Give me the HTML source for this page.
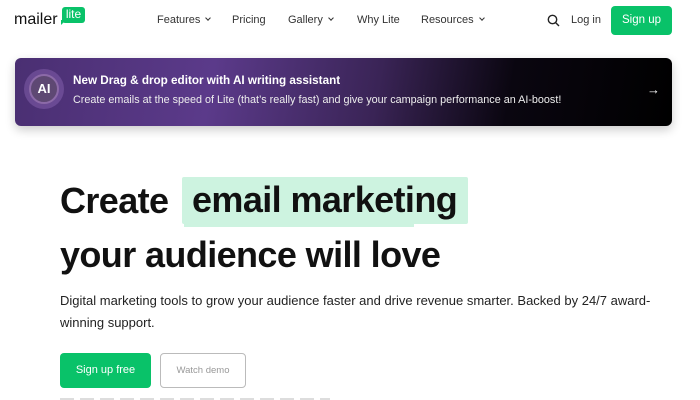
<!DOCTYPE html>
<html><head><meta charset="utf-8"><style>
*{margin:0;padding:0;box-sizing:border-box}
body{width:700px;height:400px;overflow:hidden;background:#fff;font-family:"Liberation Sans",sans-serif;color:#111;position:relative}
.a{position:absolute}
.nav{font-size:11px;color:#333;top:14px}
.chev{display:inline-block;width:4px;height:4px;border-right:1.3px solid #333;border-bottom:1.3px solid #333;transform:rotate(45deg);margin-left:6px;position:relative;top:-3px}
.banner{left:15px;top:58px;width:657px;height:68px;border-radius:6px;background:linear-gradient(100deg,#4a2f72 0%,#5b3a8a 30%,#3a2456 55%,#0a0610 75%,#000 100%);box-shadow:0 4px 10px rgba(0,0,0,.2)}
.h{font-size:36px;font-weight:bold;letter-spacing:-0.6px;line-height:46px;white-space:nowrap}
</style></head><body>
<div class="a" style="left:14px;top:11px;font-size:16px;color:#111">mailer</div>
<div class="a" style="left:62px;top:7px;width:23px;height:16px;background:#09c269;border-radius:3px;color:#fff;font-size:12px;text-align:center;line-height:15px">lite</div>
<div class="a" style="left:61px;top:20px;width:0;height:0;border-left:5px solid #09c269;border-bottom:5px solid transparent"></div>
<div class="a nav" style="left:157px">Features<span class="chev"></span></div>
<div class="a nav" style="left:232px">Pricing</div>
<div class="a nav" style="left:288px">Gallery<span class="chev"></span></div>
<div class="a nav" style="left:357px">Why Lite</div>
<div class="a nav" style="left:421px">Resources<span class="chev"></span></div>
<svg class="a" style="left:547px;top:14px" width="13" height="13" viewBox="0 0 13 13"><circle cx="5.5" cy="5.5" r="4.2" fill="none" stroke="#222" stroke-width="1.4"/><path d="M8.5 8.5L12 12" stroke="#222" stroke-width="1.4"/></svg>
<div class="a nav" style="left:571px">Log in</div>
<div class="a" style="left:611px;top:6px;width:61px;height:29px;background:#09c269;border-radius:4px;color:#fff;font-size:11.5px;text-align:center;line-height:29px">Sign up</div>

<div class="a banner"></div>
<div class="a" style="left:24px;top:69px;width:40px;height:40px;border-radius:50%;background:rgba(160,120,200,.35)"></div>
<div class="a" style="left:29px;top:74px;width:30px;height:30px;border-radius:50%;background:#5e4873;border:2px solid #8c6aa8;color:#fff;font-weight:bold;font-size:13px;text-align:center;line-height:26px">AI</div>
<div class="a" style="left:73px;top:74px;color:#fff;font-weight:bold;font-size:11.7px">New Drag &amp; drop editor with AI writing assistant</div>
<div class="a" style="left:73px;top:94px;color:#eee;font-size:10.8px">Create emails at the speed of Lite (that’s really fast) and give your campaign performance an AI-boost!</div>
<div class="a" style="left:647px;top:82px;color:#fff;font-size:13px">→</div>

<div class="a" style="left:182px;top:177px;width:286px;height:47px;background:#cdf3e0;border-radius:2px"></div>
<div class="a" style="left:184px;top:224px;width:230px;height:3px;background:#cdf3e0"></div>
<div class="a h" style="left:60px;top:178px">Create</div>
<div class="a h" style="left:192px;top:177px">email marketing</div>
<div class="a h" style="left:60px;top:232px">your audience will love</div>
<div class="a" style="left:60px;top:290px;font-size:13px;color:#222;line-height:22px;white-space:nowrap">Digital marketing tools to grow your audience faster and drive revenue smarter. Backed by 24/7 award-<br>winning support.</div>
<div class="a" style="left:60px;top:353px;width:91px;height:35px;background:#09c269;border-radius:4px;color:#fff;font-size:11px;text-align:center;line-height:35px">Sign up free</div>
<div class="a" style="left:160px;top:353px;width:86px;height:35px;border:1.3px solid #bbb;border-radius:4px;color:#999;font-size:9.5px;text-align:center;line-height:33px">Watch demo</div>
<div class="a" style="left:60px;top:398px;width:270px;height:2px;background:repeating-linear-gradient(90deg,#ddd 0 14px,transparent 14px 20px)"></div>
</body></html>
